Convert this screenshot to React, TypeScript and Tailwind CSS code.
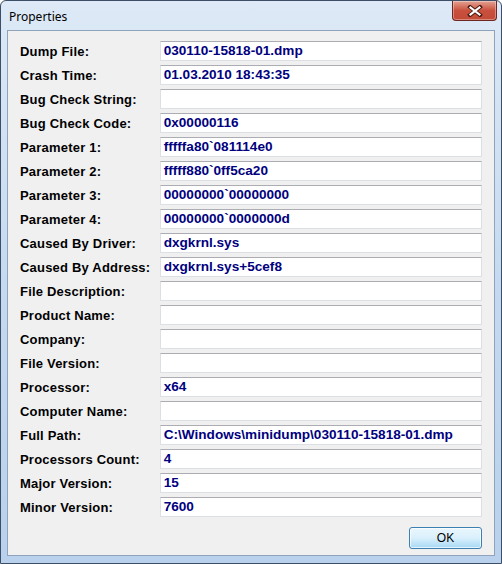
import type { ReactNode } from "react";

interface Field {
  label: string;
  value: string;
}

const fields: Field[] = [
  { label: "Dump File:", value: "030110-15818-01.dmp" },
  { label: "Crash Time:", value: "01.03.2010 18:43:35" },
  { label: "Bug Check String:", value: "" },
  { label: "Bug Check Code:", value: "0x00000116" },
  { label: "Parameter 1:", value: "fffffa80`081114e0" },
  { label: "Parameter 2:", value: "fffff880`0ff5ca20" },
  { label: "Parameter 3:", value: "00000000`00000000" },
  { label: "Parameter 4:", value: "00000000`0000000d" },
  { label: "Caused By Driver:", value: "dxgkrnl.sys" },
  { label: "Caused By Address:", value: "dxgkrnl.sys+5cef8" },
  { label: "File Description:", value: "" },
  { label: "Product Name:", value: "" },
  { label: "Company:", value: "" },
  { label: "File Version:", value: "" },
  { label: "Processor:", value: "x64" },
  { label: "Computer Name:", value: "" },
  { label: "Full Path:", value: "C:\\Windows\\minidump\\030110-15818-01.dmp" },
  { label: "Processors Count:", value: "4" },
  { label: "Major Version:", value: "15" },
  { label: "Minor Version:", value: "7600" },
];

function CloseButton() {
  return (
    <div className="ml-auto mr-[4px] flex h-[20px] w-[45px] items-center justify-center rounded-b-[4px] border border-t-0 border-[#6d2620] bg-gradient-to-b from-[#e3a193] via-[#c9503c] to-[#c24a36] shadow-[inset_0_0_0_1px_rgba(255,255,255,0.35)]">
      <svg width="16" height="12" viewBox="0 0 16 12">
        <path d="M3 2 L13 10 M13 2 L3 10" stroke="#4a1a14" strokeWidth="4" strokeLinecap="square" />
        <path d="M3.5 2.5 L12.5 9.5 M12.5 2.5 L3.5 9.5" stroke="#ffffff" strokeWidth="2.2" strokeLinecap="square" />
      </svg>
    </div>
  );
}

function TextBox({ children }: { children?: ReactNode }) {
  return (
    <div className="flex h-[20px] w-[323px] items-center border border-[#dcdfe4] border-t-[#abadb3] bg-white pl-[3px] text-[13.6px] font-bold leading-none text-[#00007f]">
      {children}
    </div>
  );
}

export default function App() {
  return (
    <div
      className="flex h-[564px] w-[502px] flex-col rounded-t-[6px] border border-[#3d4f66] bg-gradient-to-b from-[#dde9f6] via-[#c5daf0] to-[#b9d1ec]"
      style={{ fontFamily: '"Liberation Sans", Arial, sans-serif' }}
    >
      <div className="flex h-[29px] shrink-0 items-start">
        <span
          className="mt-[7px] pl-[8px] text-[12px] text-black"
          style={{ fontFamily: '"Noto Sans", "Liberation Sans", sans-serif' }}
        >
          Properties
        </span>
        <CloseButton />
      </div>

      <div className="mx-[6px] flex h-[526px] flex-col border border-[#8fa3bd] bg-[#f0f0f0] px-[12px] pt-[10px]">
        <div className="flex flex-col gap-[4px]">
          {fields.map((f) => (
            <div key={f.label} className="flex items-center">
              <div className="w-[140px] text-[13px] font-bold leading-none tracking-[0.2px] text-black">
                {f.label}
              </div>
              <TextBox>{f.value}</TextBox>
            </div>
          ))}
        </div>

        <div className="mt-[10px] flex justify-end">
          <button className="h-[22px] w-[73px] rounded-[3px] border border-[#3c7fb1] bg-gradient-to-b from-[#eaf6fd] via-[#d9f0fc] to-[#a7d9f5] text-[12px] text-black shadow-[inset_0_0_0_1px_rgba(255,255,255,0.7)]">
            OK
          </button>
        </div>
      </div>
    </div>
  );
}
